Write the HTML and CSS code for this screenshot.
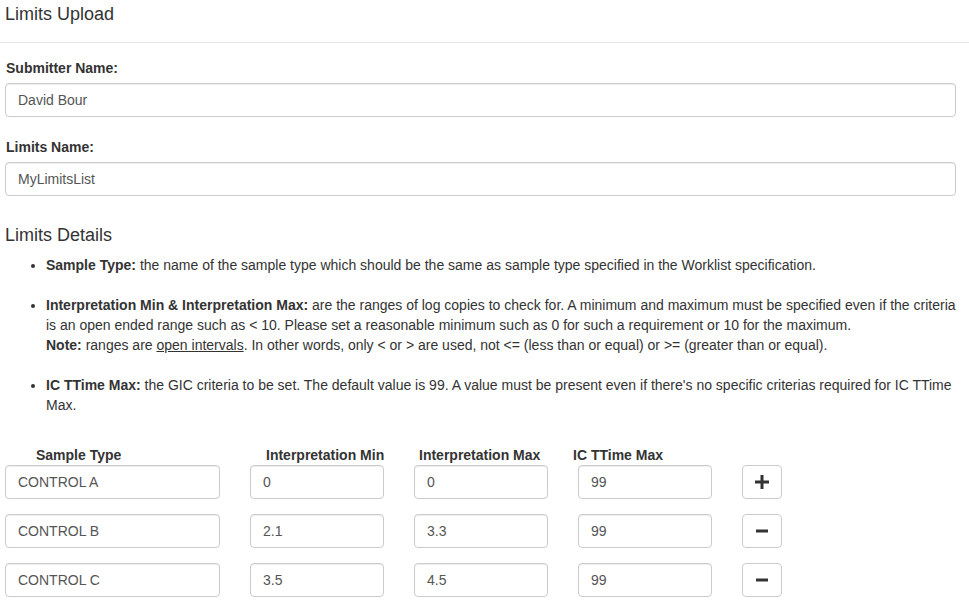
FILE: index.html
```html
<!DOCTYPE html>
<html>
<head>
<meta charset="utf-8">
<link rel="stylesheet" href="styles.css">
</head>
<body>
<div class="page-header">
  <h3 class="title">Limits Upload</h3>
</div>
<div class="content">
  <div class="form-group first">
    <label class="label">Submitter Name:</label>
    <div class="input wide">David Bour</div>
  </div>
  <div class="form-group">
    <label class="label">Limits Name:</label>
    <div class="input wide">MyLimitsList</div>
  </div>
  <h3 class="section">Limits Details</h3>
  <ul class="details">
    <li><b>Sample Type:</b> the name of the sample type which should be the same as sample type specified in the Worklist specification.</li>
    <li><b>Interpretation Min &amp; Interpretation Max:</b> are the ranges of log copies to check for. A minimum and maximum must be specified even if the criteria is an open ended range such as &lt; 10. Please set a reasonable minimum such as 0 for such a requirement or 10 for the maximum.<br><b>Note:</b> ranges are <u>open intervals</u>. In other words, only &lt; or &gt; are used, not &lt;= (less than or equal) or &gt;= (greater than or equal).</li>
    <li><b>IC TTime Max:</b> the GIC criteria to be set. The default value is 99. A value must be present even if there's no specific criterias required for IC TTime Max.</li>
  </ul>
  <div class="table-head">
    <div class="th th-type">Sample Type</div>
    <div class="th th-min">Interpretation Min</div>
    <div class="th th-max">Interpretation Max</div>
    <div class="th th-ic">IC TTime Max</div>
  </div>
  <div class="row">
    <div class="input">CONTROL A</div>
    <div class="input">0</div>
    <div class="input">0</div>
    <div class="input">99</div>
    <div class="btn">
      <svg width="14" height="14" viewBox="0 0 14 14"><rect x="5.5" y="0" width="3" height="14" fill="#333"/><rect x="0" y="5.5" width="14" height="3" fill="#333"/></svg>
    </div>
  </div>
  <div class="row">
    <div class="input">CONTROL B</div>
    <div class="input">2.1</div>
    <div class="input">3.3</div>
    <div class="input">99</div>
    <div class="btn">
      <svg width="14" height="14" viewBox="0 0 14 14"><rect x="1" y="5.5" width="12" height="3" fill="#333"/></svg>
    </div>
  </div>
  <div class="row">
    <div class="input">CONTROL C</div>
    <div class="input">3.5</div>
    <div class="input">4.5</div>
    <div class="input">99</div>
    <div class="btn">
      <svg width="14" height="14" viewBox="0 0 14 14"><rect x="1" y="5.5" width="12" height="3" fill="#333"/></svg>
    </div>
  </div>
</div>
</body>
</html>
```

FILE: styles.css
```css
* { box-sizing: border-box; }
html, body { margin: 0; padding: 0; background: #fff; }
body {
  font-family: "Liberation Sans", Arial, sans-serif;
  font-size: 14px;
  line-height: 20px;
  color: #333;
}
.page-header {
  padding: 4px 5px 18px 5px;
  border-bottom: 1px solid #e5e5e5;
  height: 43px;
}
.title, .section {
  margin: 0;
  font-size: 18px;
  font-weight: normal;
  line-height: 20px;
}
.content {
  padding: 0 13px 0 5px;
}
.form-group { margin-top: 20px; }
.form-group.first { margin-top: 15px; }
.label {
  display: block;
  font-weight: bold;
  margin-bottom: 5px;
  padding-left: 1px;
}
.input {
  height: 34px;
  padding: 6px 12px;
  border: 1px solid #ccc;
  border-radius: 4px;
  box-shadow: inset 0 1px 1px rgba(0,0,0,.075);
  color: #555;
  background: #fff;
  white-space: nowrap;
}
.section {
  margin-top: 29px;
  padding-left: 0;
}
.details {
  margin: 10px 0 0 0;
  padding-left: 41px;
}
.details li { margin-bottom: 20px; }
.details li:last-child { margin-bottom: 0; }
.table-head {
  display: flex;
  margin-top: 30px;
  padding-left: 31px;
  font-weight: bold;
  height: 20px;
}
.th-type { width: 230px; }
.th-min { width: 153px; }
.th-max { width: 154px; }
.row {
  display: grid;
  grid-template-columns: 215px 134px 134px 134px 40px;
  column-gap: 30px;
  margin-bottom: 15px;
}
.btn {
  height: 34px;
  border: 1px solid #ccc;
  border-radius: 4px;
  background: #fff;
  display: flex;
  align-items: center;
  justify-content: center;
}
```
